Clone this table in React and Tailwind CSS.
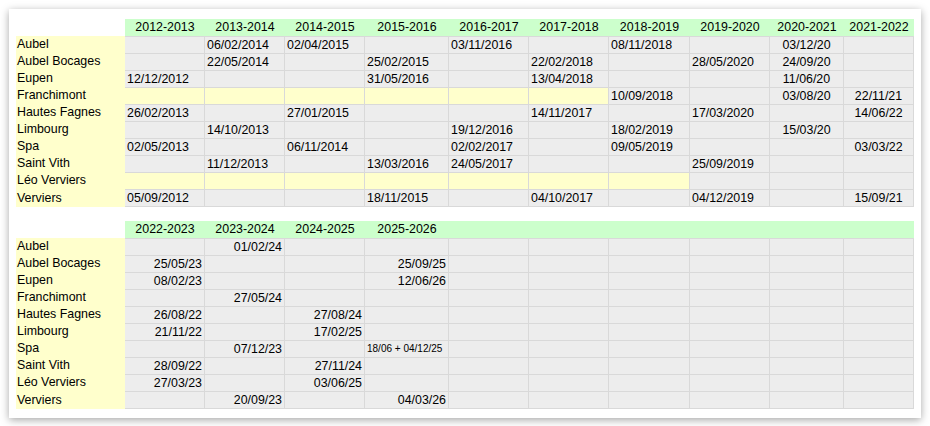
import React from 'react';

const labels = [
  'Aubel', 'Aubel Bocages', 'Eupen', 'Franchimont', 'Hautes Fagnes',
  'Limbourg', 'Spa', 'Saint Vith', 'Léo Verviers', 'Verviers',
];

const gridCols = 'grid grid-cols-[109px_80px_80px_80px_84px_80px_80px_81px_80px_74px_70px]';

const topSeasons = [
  '2012-2013', '2013-2014', '2014-2015', '2015-2016', '2016-2017',
  '2017-2018', '2018-2019', '2019-2020', '2020-2021', '2021-2022',
];

// 4-digit years sit left, the short ones are centred
const topRows = [
  ['', '06/02/2014', '02/04/2015', '', '03/11/2016', '', '08/11/2018', '', '03/12/20', ''],
  ['', '22/05/2014', '', '25/02/2015', '', '22/02/2018', '', '28/05/2020', '24/09/20', ''],
  ['12/12/2012', '', '', '31/05/2016', '', '13/04/2018', '', '', '11/06/20', ''],
  ['', '', '', '', '', '', '10/09/2018', '', '03/08/20', '22/11/21'],
  ['26/02/2013', '', '27/01/2015', '', '', '14/11/2017', '', '17/03/2020', '', '14/06/22'],
  ['', '14/10/2013', '', '', '19/12/2016', '', '18/02/2019', '', '15/03/20', ''],
  ['02/05/2013', '', '06/11/2014', '', '02/02/2017', '', '09/05/2019', '', '', '03/03/22'],
  ['', '11/12/2013', '', '13/03/2016', '24/05/2017', '', '', '25/09/2019', '', ''],
  ['', '', '', '', '', '', '', '', '', ''],
  ['05/09/2012', '', '', '18/11/2015', '', '04/10/2017', '', '04/12/2019', '', '15/09/21'],
];

// how many leading cells of a row are still yellow (no club that season)
const topYellow = { 3: 6, 8: 7 };

const bottomSeasons = ['2022-2023', '2023-2024', '2024-2025', '2025-2026', '', '', '', '', '', ''];

const bottomRows = [
  ['', '01/02/24', '', ''],
  ['25/05/23', '', '', '25/09/25'],
  ['08/02/23', '', '', '12/06/26'],
  ['', '27/05/24', '', ''],
  ['26/08/22', '', '27/08/24', ''],
  ['21/11/22', '', '17/02/25', ''],
  ['', '07/12/23', '', '18/06 + 04/12/25'],
  ['28/09/22', '', '27/11/24', ''],
  ['27/03/23', '', '03/06/25', ''],
  ['', '20/09/23', '', '04/03/26'],
];

const HeaderRow = ({ seasons }) => (
  <div className={`${gridCols} h-[17px]`}>
    <div className="bg-white" />
    {seasons.map((s, i) => (
      <div key={i} className="bg-[#ccffcc] flex items-center justify-center">
        {s}
      </div>
    ))}
  </div>
);

const Cell = ({ value, yellow, last, align }) => {
  const small = value.includes('+');
  return (
    <div
      className={`box-border flex items-center border-t border-r border-[#d9d9d9] whitespace-nowrap ${
        last ? 'border-b h-[18px]' : 'h-[17px]'
      } ${yellow ? 'bg-[#ffffcc]' : 'bg-[#ededed]'} ${
        small
          ? 'justify-start pl-[2px] text-[10px]'
          : align === 'right'
          ? 'justify-end pr-[2px]'
          : align === 'center'
          ? 'justify-center'
          : 'justify-start pl-[2px]'
      }`}
    >
      {value}
    </div>
  );
};

const TopTable = () => (
  <div>
    <HeaderRow seasons={topSeasons} />
    {labels.map((label, r) => (
      <div key={label} className={gridCols}>
        <div className="bg-[#ffffcc] flex items-center pl-[1px]">{label}</div>
        {topRows[r].map((v, c) => (
          <Cell
            key={c}
            value={v}
            yellow={c < (topYellow[r] || 0)}
            last={r === labels.length - 1}
            align={v.length === 8 ? 'center' : 'left'}
          />
        ))}
      </div>
    ))}
  </div>
);

const BottomTable = () => (
  <div>
    <HeaderRow seasons={bottomSeasons} />
    {labels.map((label, r) => (
      <div key={label} className={gridCols}>
        <div className="bg-[#ffffcc] flex items-center pl-[1px]">{label}</div>
        {[...bottomRows[r], '', '', '', '', '', ''].map((v, c) => (
          <Cell key={c} value={v} last={r === labels.length - 1} align="right" />
        ))}
      </div>
    ))}
  </div>
);

export default function App() {
  return (
    <div className="w-[930px] h-[426px] bg-white p-[9px] font-['Liberation_Sans',Arial,sans-serif] text-[12.4px] leading-none text-black">
      <div className="w-[912px] h-[409px] bg-white shadow-[0_2px_8px_rgba(0,0,0,0.35)] pl-[7px] pt-[10px] flex flex-col gap-[14px]">
        <TopTable />
        <BottomTable />
      </div>
    </div>
  );
}
